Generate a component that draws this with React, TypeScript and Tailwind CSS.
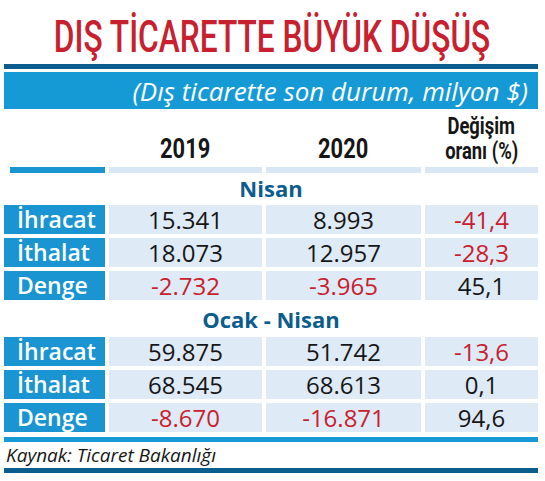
import React from "react";

type Cell = { v: string; neg?: boolean };
type Row = { label: string; cells: Cell[] };

const nisan: Row[] = [
  { label: "İhracat", cells: [{ v: "15.341" }, { v: "8.993" }, { v: "-41,4", neg: true }] },
  { label: "İthalat", cells: [{ v: "18.073" }, { v: "12.957" }, { v: "-28,3", neg: true }] },
  { label: "Denge", cells: [{ v: "-2.732", neg: true }, { v: "-3.965", neg: true }, { v: "45,1" }] },
];

const ocak: Row[] = [
  { label: "İhracat", cells: [{ v: "59.875" }, { v: "51.742" }, { v: "-13,6", neg: true }] },
  { label: "İthalat", cells: [{ v: "68.545" }, { v: "68.613" }, { v: "0,1" }] },
  { label: "Denge", cells: [{ v: "-8.670", neg: true }, { v: "-16.871", neg: true }, { v: "94,6" }] },
];

const body = { fontFamily: '"Open Sans", "Noto Sans", sans-serif' };
const cond = { fontFamily: 'Roboto, "Liberation Sans", sans-serif' };

function DataRow({ r }: { r: Row }) {
  return (
    <div className="grid grid-cols-[101px_153px_155px_113px] gap-x-[4px] h-[29px]">
      <div className="bg-[#1a95d2] text-white font-semibold text-[23px] leading-[29px] pl-[13px] whitespace-nowrap">
        {r.label}
      </div>
      {r.cells.map((c, i) => (
        <div
          key={i}
          className={
            "bg-[#deeaf6] text-[24px] leading-[29px] text-center " +
            (c.neg ? "text-[#c8202e]" : "text-[#161616]")
          }
        >
          {c.v}
        </div>
      ))}
    </div>
  );
}

export default function App() {
  return (
    <div className="w-[545px] h-[481px] bg-white overflow-hidden" style={body}>
      <div className="h-[64px] flex justify-center pt-[15px]">
        <span
          className="inline-block text-[#c8202e] text-[44px] leading-[44px] font-medium whitespace-nowrap scale-x-[0.72] origin-center"
          style={cond}
        >
          DIŞ TİCARETTE BÜYÜK DÜŞÜŞ
        </span>
      </div>
      <div className="ml-[4px] mr-[7px]">
        <div className="h-[5px] bg-[#0b5d8d]" />
        <div className="h-[3px]" />
        <div className="h-[37px] bg-[#169ad6] flex items-center justify-end pr-[10px]">
          <span className="text-white italic text-[26px] leading-none whitespace-nowrap">
            (Dış ticarette son durum, milyon $)
          </span>
        </div>
        <div className="grid grid-cols-[101px_153px_155px_113px] gap-x-[4px] h-[58px] items-end pb-[4px]" style={cond}>
          <div />
          <div className="text-center font-bold text-[28px] leading-[28px] text-[#161616]">
            <span className="inline-block scale-x-[0.78]">2019</span>
          </div>
          <div className="text-center font-bold text-[28px] leading-[28px] text-[#161616]">
            <span className="inline-block scale-x-[0.78]">2020</span>
          </div>
          <div className="flex flex-col items-center font-bold text-[23px] text-[#161616]">
            <span className="block scale-x-[0.8] whitespace-nowrap leading-[23px]">Değişim</span>
            <span className="block scale-x-[0.8] whitespace-nowrap leading-[23px] mt-[2px]">oranı (%)</span>
          </div>
        </div>
        <div className="grid grid-cols-[101px_153px_155px_113px] gap-x-[4px] h-[6px]">
          <div className="bg-[#1a95d2] ml-[6px]" />
          <div className="bg-[#d9e7f4]" />
          <div className="bg-[#d9e7f4]" />
          <div className="bg-[#d9e7f4]" />
        </div>
        <div className="h-[32px] flex justify-center pt-[1px]">
          <span className="text-[#0b5d8d] font-bold text-[22px] leading-[28px]">Nisan</span>
        </div>
        <div className="flex flex-col gap-y-[4px]">
          {nisan.map((r, i) => (
            <DataRow key={i} r={r} />
          ))}
        </div>
        <div className="h-[37px] flex justify-center items-center">
          <span className="text-[#0b5d8d] font-bold text-[22px] leading-[28px]">Ocak - Nisan</span>
        </div>
        <div className="flex flex-col gap-y-[4px]">
          {ocak.map((r, i) => (
            <DataRow key={i} r={r} />
          ))}
        </div>
        <div className="h-[5px]" />
        <div className="h-[5px] bg-[#169ad6]" />
        <div className="h-[26px] flex items-center">
          <span className="italic text-[19px] leading-none text-[#161616] pl-[2px]">Kaynak: Ticaret Bakanlığı</span>
        </div>
        <div className="h-[5px] bg-[#0b5d8d]" />
      </div>
    </div>
  );
}
